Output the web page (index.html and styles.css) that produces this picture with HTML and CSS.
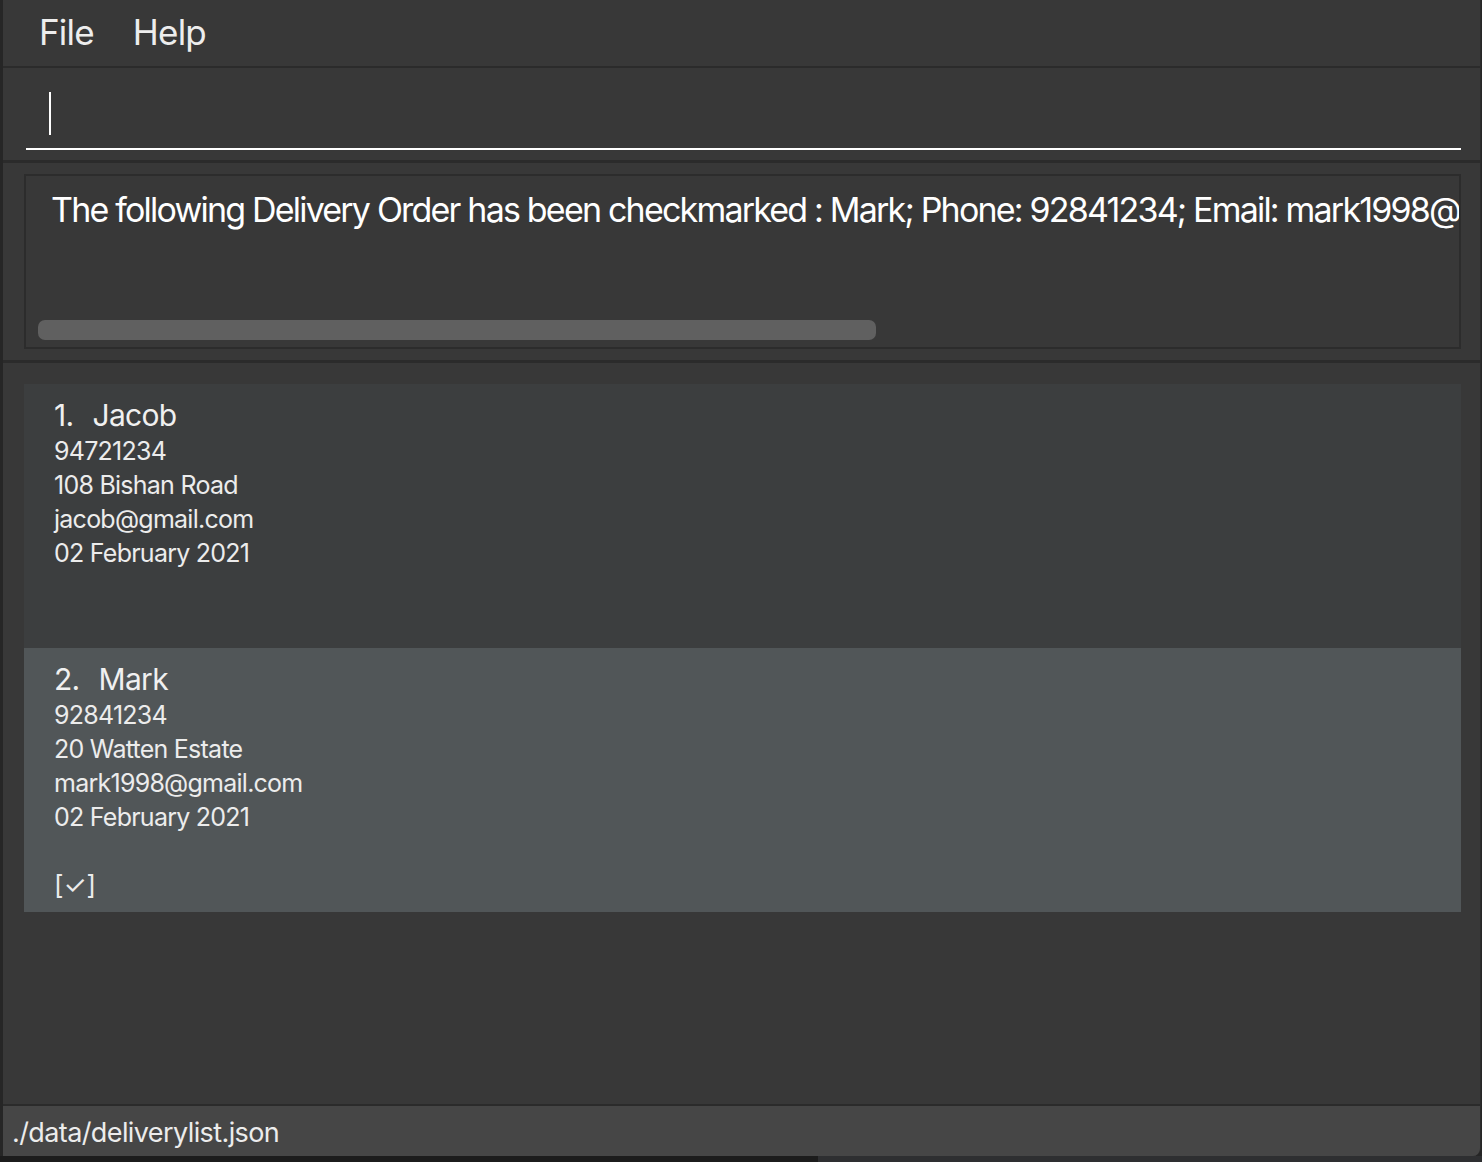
FILE: index.html
```html
<!DOCTYPE html>
<html>
<head>
<meta charset="utf-8">
<link rel="stylesheet" href="styles.css">
</head>
<body>
<div class="window">
  <div class="menubar">
    <span class="menu-item">File</span>
    <span class="menu-item">Help</span>
  </div>
  <div class="command-pane">
    <div class="command-box"><span class="caret"></span></div>
  </div>
  <div class="result-pane">
    <div class="result-box">
      <div class="result-text">The following Delivery Order has been checkmarked : Mark; Phone: 92841234; Email: mark1998@gmail.com; Address: 20 Watten Estate</div>
      <div class="scrollbar"><div class="thumb"></div></div>
    </div>
  </div>
  <div class="list-pane">
    <div class="card even">
      <div class="title"><span class="idx">1.</span>Jacob</div>
      <div class="line">94721234</div>
      <div class="line">108 Bishan Road</div>
      <div class="line">jacob@gmail.com</div>
      <div class="line">02 February 2021</div>
    </div>
    <div class="card odd">
      <div class="title"><span class="idx">2.</span>Mark</div>
      <div class="line">92841234</div>
      <div class="line">20 Watten Estate</div>
      <div class="line">mark1998@gmail.com</div>
      <div class="line">02 February 2021</div>
      <div class="check">[✓]</div>
    </div>
  </div>
  <div class="statusbar">./data/deliverylist.json</div>
</div>
<div class="bottom-strip"><div class="bs-left"></div><div class="bs-right"></div></div>
</body>
</html>
```
FILE: styles.css
```css
html, body {
  margin: 0;
  padding: 0;
}
body {
  width: 1482px;
  height: 1162px;
  overflow: hidden;
  background: #262626;
  font-family: Inter, "Noto Sans", sans-serif;
  color: #f2f2f2;
}
.window {
  margin-left: 3px;
  width: 1477px;
  height: 1156px;
  background: #383838;
  border-right: 1px solid #2c2c2c;
  border-bottom-right-radius: 8px;
  display: flex;
  flex-direction: column;
  overflow: hidden;
}
.menubar {
  height: 66px;
  flex: none;
  display: flex;
  align-items: center;
  gap: 39px;
  padding-left: 36px;
  border-bottom: 2px solid #2b2b2b;
  box-sizing: content-box;
}
.menu-item {
  font-size: 35px;
  letter-spacing: -0.8px;
  color: #ededed;
  line-height: 1;
  padding-bottom: 1px;
}
.command-pane {
  flex: none;
  padding: 0 19px 0 23px;
  border-bottom: 3px solid #2b2b2b;
  box-sizing: border-box;
  height: 95px;
  display: flex;
  flex-direction: column;
}
.command-box {
  margin-top: 24px;
  height: 56px;
  border-bottom: 2px solid #ffffff;
  padding-left: 23px;
}
.caret {
  display: block;
  width: 2px;
  height: 43px;
  background: #ffffff;
}
.result-pane {
  flex: none;
  height: 200px;
  box-sizing: border-box;
  padding: 11px 19px 11px 21px;
  border-bottom: 3px solid #2b2b2b;
}
.result-box {
  height: 175px;
  box-sizing: border-box;
  border: 2px solid #2c2c2c;
  background: #383838;
  position: relative;
  overflow: hidden;
}
.result-text {
  white-space: nowrap;
  font-size: 34px;
  letter-spacing: -1.8px;
  padding-left: 25px;
  padding-top: 13px;
  line-height: 42px;
  color: #ffffff;
}
.scrollbar {
  position: absolute;
  left: 12px;
  right: 12px;
  top: 144px;
  height: 20px;
}
.thumb {
  width: 838px;
  height: 20px;
  border-radius: 7px;
  background: #606060;
}
.list-pane {
  flex: 1;
  padding: 21px 19px 0 21px;
  display: flex;
  flex-direction: column;
}
.card {
  height: 264px;
  box-sizing: border-box;
  padding: 14px 30px 0 30px;
}
.card.even { background: #3c3e3f; }
.card.odd { background: #515658; }
.title {
  font-size: 30px;
  letter-spacing: -0.7px;
  line-height: 34px;
  margin-bottom: 2px;
  color: #f0f0f0;
}
.idx {
  margin-right: 19px;
}
.line {
  font-size: 25px;
  letter-spacing: -0.75px;
  line-height: 34px;
  color: #ececec;
}
.check {
  margin-top: 34px;
  font-size: 26px;
  line-height: 34px;
  color: #ececec;
}
.statusbar {
  flex: none;
  height: 52px;
  box-sizing: border-box;
  border-top: 2px solid #2b2b2b;
  background: #464646;
  font-size: 27px;
  letter-spacing: -0.6px;
  line-height: 54px;
  padding-left: 9px;
  color: #ececec;
}
.bottom-strip {
  display: flex;
  height: 6px;
}
.bs-left { width: 818px; background: #1c1c1c; }
.bs-right { flex: 1; background: #2e2f31; }
```
